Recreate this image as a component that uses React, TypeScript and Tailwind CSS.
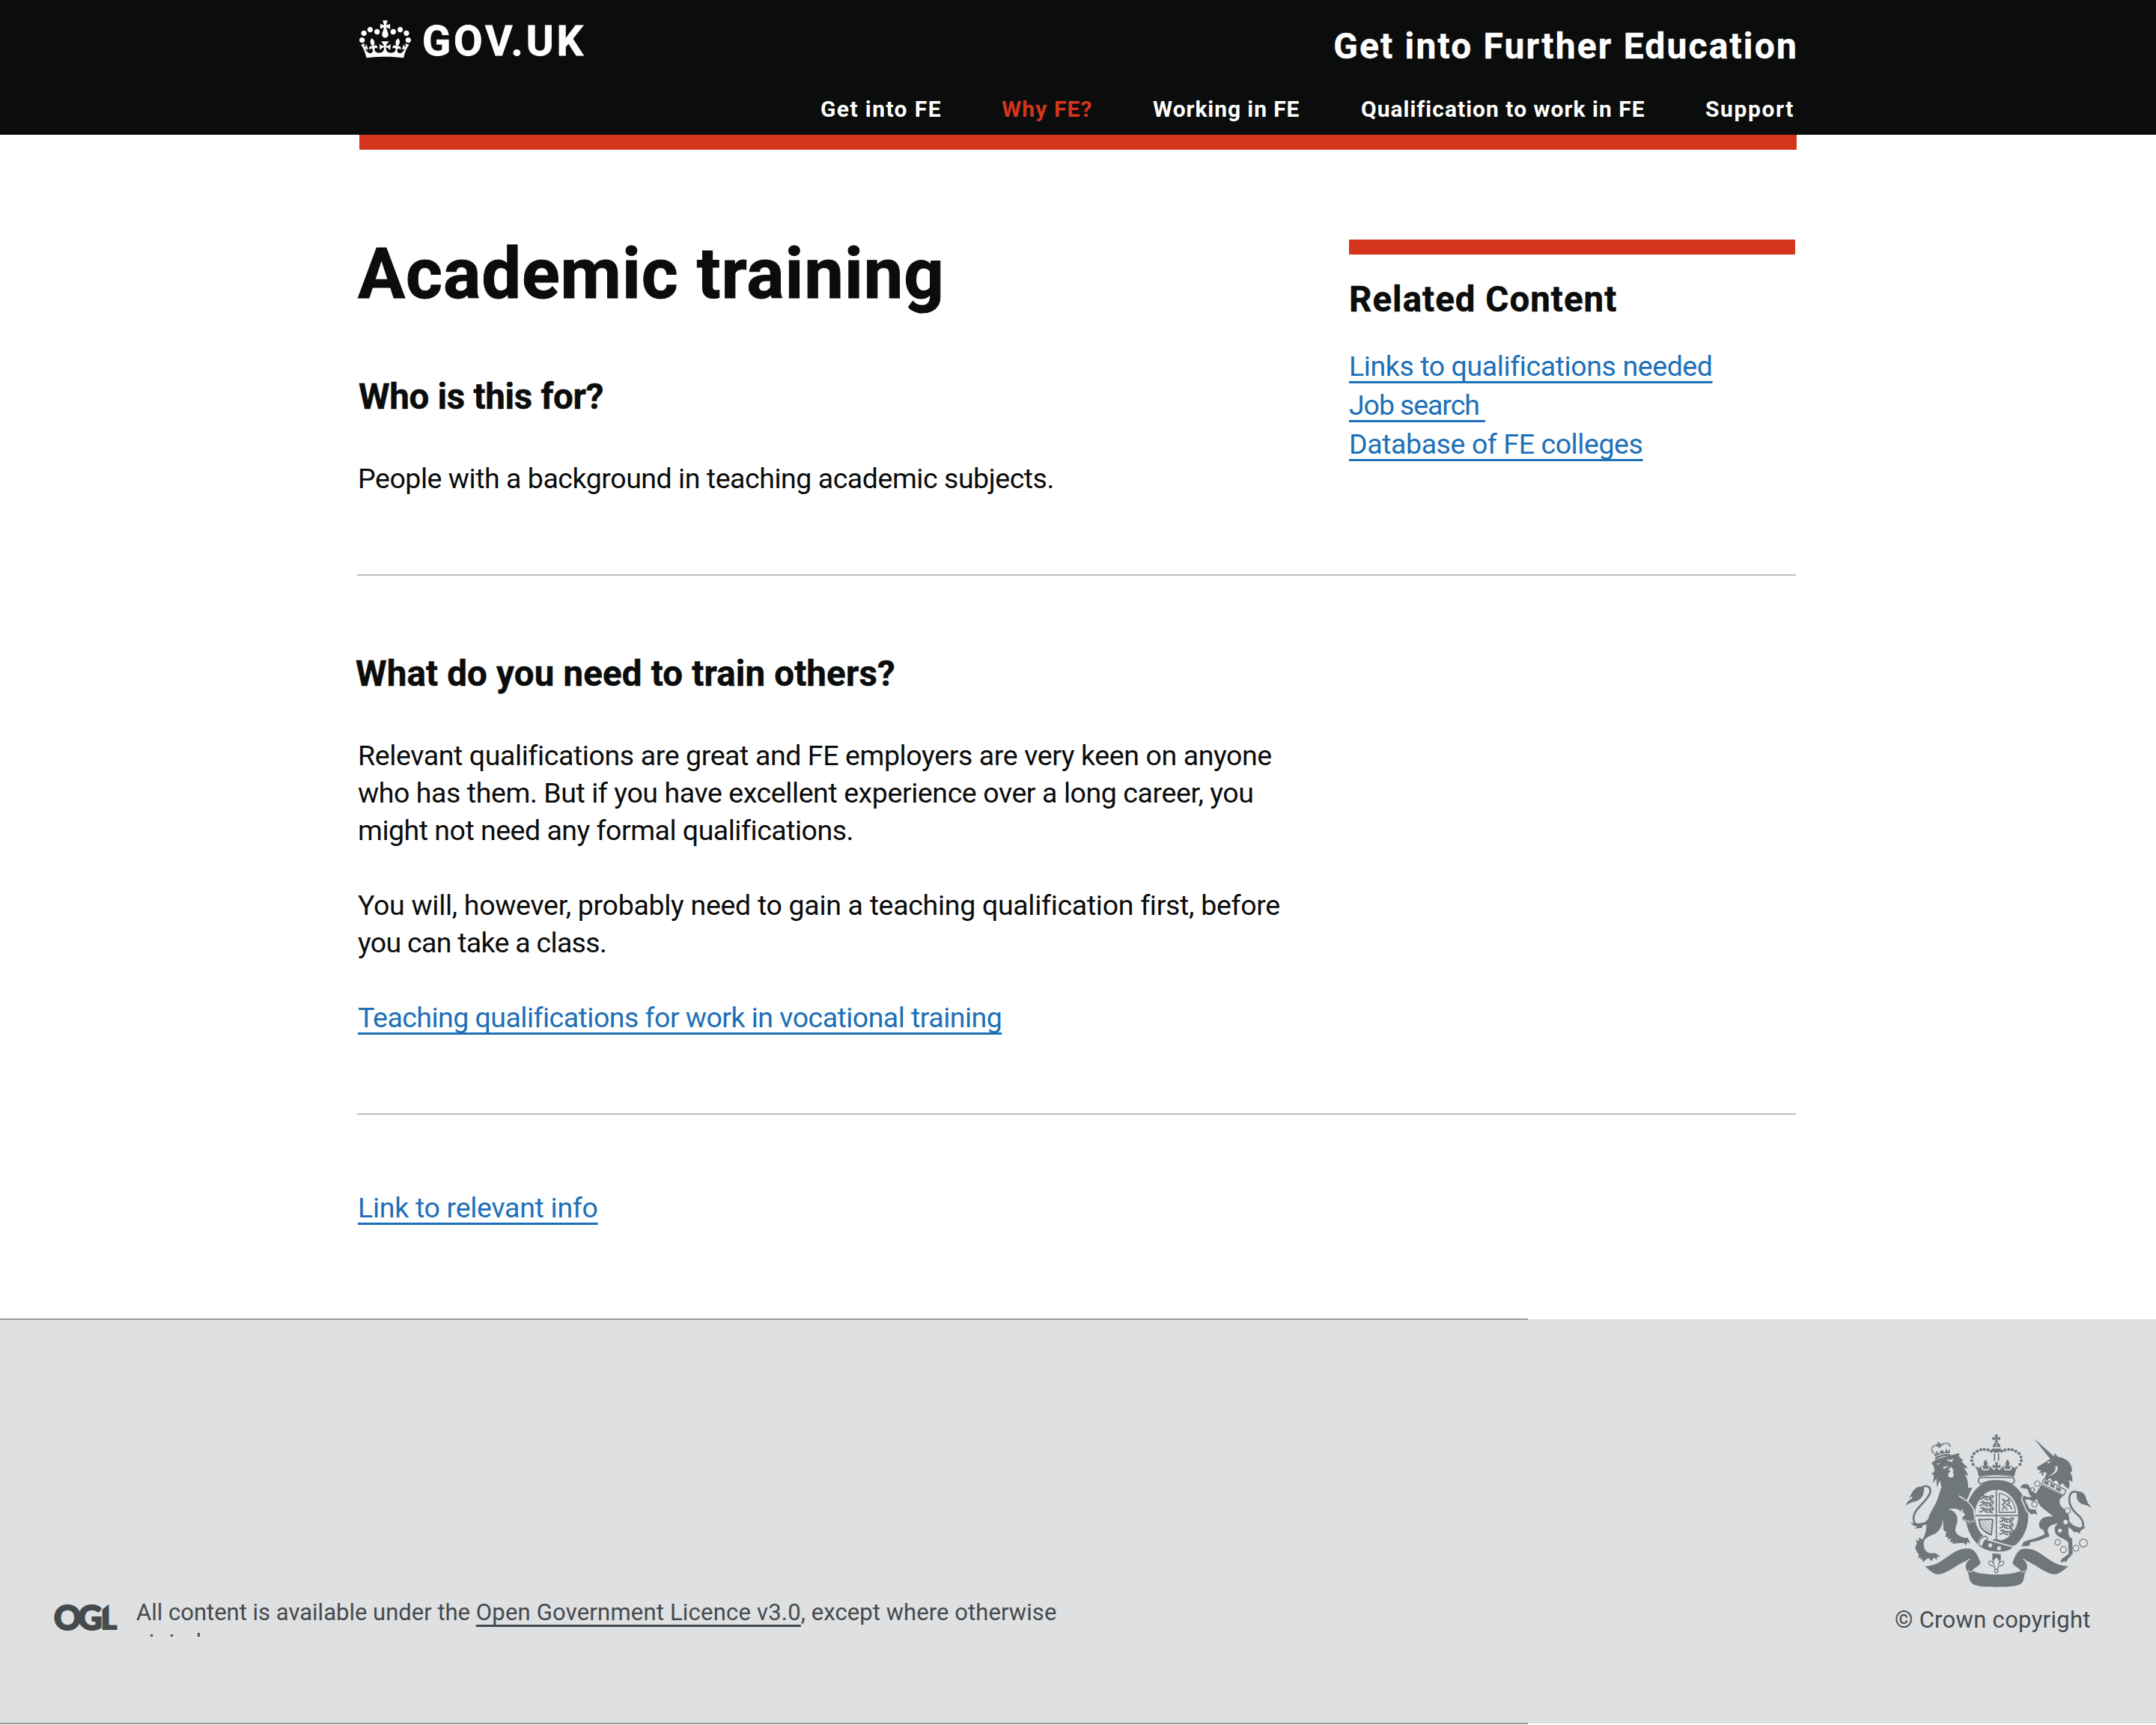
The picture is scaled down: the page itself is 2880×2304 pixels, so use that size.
import type { ReactNode } from "react";

const NAV = [
  { label: "Get into FE", style: "ml-px tracking-[1.4px] text-white" },
  { label: "Why FE?", style: "tracking-[1.1px] text-[#d4351c]" },
  { label: "Working in FE", style: "tracking-[0.9px] text-white" },
  { label: "Qualification to work in FE", style: "ml-px tracking-[1.02px] text-white" },
  { label: "Support", style: "ml-px tracking-[1.6px] text-white" },
];

const LINK =
  "text-[#1d70b8] underline decoration-[3px] underline-offset-[7px] [text-decoration-skip-ink:none] whitespace-pre";

function Crown() {
  return (
    <svg viewBox="0 0 132 97" className="h-[51px] w-[69px]" fill="#fff" fillRule="evenodd">
      <path d="M25 30.2c3.5 1.5 7.7-.2 9.1-3.7 1.5-3.6-.2-7.8-3.9-9.2-3.6-1.4-7.6.3-9.1 3.9-1.4 3.5.3 7.5 3.9 9zM9 39.5c3.6 1.5 7.8-.2 9.2-3.7 1.5-3.6-.2-7.8-3.9-9.1-3.6-1.5-7.6.2-9.1 3.8-1.4 3.5.3 7.5 3.8 9zM4.4 57.2c3.5 1.5 7.7-.2 9.1-3.8 1.5-3.6-.2-7.7-3.9-9.1-3.5-1.5-7.6.3-9.1 3.8-1.4 3.5.3 7.6 3.9 9.1zm38.3-21.4c3.5 1.5 7.7-.2 9.1-3.8 1.5-3.6-.2-7.7-3.9-9.1-3.6-1.5-7.6.3-9.1 3.8-1.3 3.6.4 7.7 3.9 9.1zm64.4-5.6c-3.6 1.5-7.8-.2-9.1-3.7-1.5-3.6.2-7.8 3.8-9.2 3.6-1.4 7.7.3 9.2 3.9 1.3 3.5-.4 7.5-3.9 9zm15.9 9.3c-3.6 1.5-7.7-.2-9.1-3.7-1.5-3.6.2-7.8 3.7-9.1 3.6-1.5 7.7.2 9.2 3.8 1.5 3.5-.3 7.5-3.8 9zm4.7 17.7c-3.6 1.5-7.8-.2-9.2-3.8-1.5-3.6.2-7.7 3.9-9.1 3.6-1.5 7.7.3 9.2 3.8 1.3 3.5-.4 7.6-3.9 9.1zM89.3 35.8c-3.6 1.5-7.8-.2-9.2-3.8-1.4-3.6.2-7.7 3.9-9.1 3.6-1.5 7.7.3 9.2 3.8 1.4 3.6-.3 7.7-3.9 9.1zM69.7 17.7l8.9 4.7V9.3l-8.9 2.8c-.2-.3-.5-.6-.9-.9L72.4 0H59.6l3.5 11.2c-.3.3-.6.5-.9.9l-8.8-2.8v13.1l8.8-4.7c.3.3.6.7.9.9l-5 15.4v.1c-.2.8-.4 1.6-.4 2.4 0 4.1 3.1 7.5 7 8.1h.2c.3 0 .7.1 1 .1.4 0 .7 0 1-.1h.2c4-.6 7.1-4.1 7.1-8.1 0-.8-.1-1.7-.4-2.4V34l-5.1-15.4c.4-.2.7-.6 1-.9zM66 92.8c16.9 0 32.8 1.1 47.1 3.2 4-16.9 8.9-26.7 14-33.5l-9.6-3.4c1 4.9 1.1 7.2 0 10.2-1.5-1.4-3-4.3-4.2-8.7L108.6 76c2.8-2 5-3.2 7.5-3.3-4.4 9.4-10 11.9-13.6 11.2-4.3-.8-6.3-4.6-5.6-7.9 1-4.7 5.7-5.9 8-.5 4.3-8.7-3-11.4-7.6-8.8 7.1-7.2 7.9-13.5 2.1-21.1-8 6.1-8.1 12.3-4.5 20.8-4.7-5.4-12.1-2.5-9.5 6.2 3.4-5.2 7.9-2 7.2 3.1-.6 4.3-6.4 7.8-13.5 7.2-10.3-.9-10.9-8-11.2-13.8 2.5-.5 7.1 1.8 11 7.3L80.2 60c-4.1 4.4-8 5.3-12.3 5.4 1.4-4.4 8-11.6 8-11.6H55.5s6.4 7.2 7.9 11.6c-4.2-.1-8-1-12.3-5.4l1.4 16.4c3.9-5.5 8.5-7.7 10.9-7.3-.3 5.8-.9 12.8-11.1 13.8-7.2.6-12.9-2.9-13.5-7.2-.7-5 3.8-8.3 7.1-3.1 2.7-8.7-4.6-11.6-9.4-6.2 3.7-8.5 3.6-14.7-4.6-20.8-5.8 7.6-5 13.9 2.2 21.1-4.7-2.6-11.9.1-7.7 8.8 2.3-5.5 7.1-4.2 8.1.5.7 3.3-1.3 7.1-5.7 7.9-3.5.7-9-1.8-13.5-11.2 2.5.1 4.7 1.3 7.5 3.3l-4.7-15.4c-1.2 4.4-2.7 7.2-4.3 8.7-1.1-3-.9-5.3 0-10.2l-9.5 3.4c5 6.9 9.9 16.7 14 33.5 14.8-2.1 30.8-3.2 47.7-3.2z" />
    </svg>
  );
}

const INK = "#6f777b";
const PAPER = "#dee0e2";

// Pearls on the left arch of the imperial crown; the right arch mirrors them.
const PEARLS = [
  [407, 228], [402, 213], [403, 198], [411, 184], [424, 175], [438, 169], [452, 168], [467, 170], [480, 175],
];

const BEZANTS = [
  [664, 305, 11], [645, 329, 8], [653, 388, 11], [786, 413, 11], [746, 540, 11], [769, 569, 12], [819, 564, 12], [849, 543, 16],
];

// A cross with flared arms centred on the origin.
function CrossPattee({ x, y, s }: { x: number; y: number; s: number }) {
  return (
    <path
      transform={`translate(${x} ${y}) scale(${s})`}
      d="M-7-16H7L3-3 16-7V7L3 3 7 16H-7L-3 3-16 7V-7L-3-3Z"
    />
  );
}

// Three walking lions, stacked.
function LionStack({ x, y }: { x: number; y: number }) {
  return (
    <g transform={`translate(${x} ${y})`} fill="none" stroke={INK} strokeWidth="5">
      {[0, 25, 50].map((dy) => (
        <path
          key={dy}
          d={`M-4 ${dy + 18}l13-3 2-7 14-2 12 3 6-6 10 1-4 7-8 4 2 6 8 1M0 ${dy + 4}l10-3 6 3-2 5M27 ${dy + 8}l-3 11 9 1M39 ${dy + 9}l-2 9 5 2M14 ${dy + 9}l6 9`}
        />
      ))}
    </g>
  );
}

function RoyalArms() {
  return (
    <svg viewBox="132 102 756 624" className="h-[208px] w-[252px]" fill={INK} strokeLinejoin="round">
      {/* lion tail */}
      <path d="M202 474C160 474 160 432 188 402 220 368 236 350 236 332 234 314 218 312 204 318" fill="none" stroke={INK} strokeWidth="8" />
      <path d="M208 318C182 312 168 330 160 346L150 362C160 356 170 354 160 366 146 374 140 382 138 394 156 372 192 384 206 350 212 334 212 324 208 318Z" />
      <path d="M156 460C176 470 196 462 212 460 226 450 238 438 244 424 242 446 234 462 222 468L206 472 200 484C192 482 184 484 172 486L182 476C170 476 162 470 156 460Z" />
      {/* lion body */}
      <path d="M240 222L262 206 352 182 350 196 368 212 360 216C372 226 380 234 386 244L370 240C378 254 384 262 388 274L374 268C384 282 388 304 387 322L406 320C396 330 394 348 380 372L398 392C408 400 412 420 412 436L404 462 396 446 384 460 384 446 370 456 364 440 376 428 362 418 366 404 356 416C350 404 330 402 306 408 326 410 342 424 344 444 346 470 332 480 337 498 347 516 370 524 386 522L397 546 385 538 378 553C376 546 372 542 366 542L340 544 324 546 326 538 314 540 318 524C312 524 310 530 308 534L306 520 296 518 300 496C292 498 290 492 288 488L286 444C284 474 272 498 250 508 230 516 212 524 210 538 206 562 216 582 240 584 256 582 270 588 274 600L262 597 262 613C258 606 254 602 248 602L242 616 228 604C222 606 214 612 206 620L204 606 194 610 198 600 186 602 190 590C180 576 174 566 176 556L182 546 178 530 190 534 190 521 204 528C214 514 220 490 220 470L232 430 246 404C262 380 270 350 280 318L274 292 262 320 260 284 246 302 250 272 240 264C250 262 252 256 252 250L250 236Z" />
      <path d="M302 208l14 2 12-6-6 14-16-4zM262 224l12-2-8 8zM286 238l24-4-10 6-10 6zM308 250l10-14 10 14-2 10q6 8 2 16-8 8-18 2-6-8 0-16l8-8z" fill={PAPER} />
      {/* lion crown */}
      <g transform="translate(280 170) rotate(-12)">
        <path d="M-32 24Q0 14 32 24L31 32Q0 22-31 32ZM-30 20L-34 2-24 12-20-2-13 12-8 12-6 2H6L8 12 13 12 20-2 24 12 34 2 30 20Q0 10-30 20Z" />
        <path d="M-36 0C-44-24-14-30 0-14 14-30 44-24 36 0" fill="none" stroke={INK} strokeWidth="7.5" strokeDasharray="0.1 10" strokeLinecap="round" />
        <CrossPattee x={-6} y={-22} s={0.7} />
      </g>
      {/* unicorn tail */}
      <path d="M828 496C858 480 852 450 822 426 796 402 790 380 793 358 798 336 812 334 828 340" fill="none" stroke={INK} strokeWidth="8" />
      <path d="M822 336C850 334 858 352 860 366L866 378C860 378 874 388 882 404 864 384 836 396 824 366 820 352 824 342 822 336Z" />
      <path d="M788 448C800 474 830 486 858 478 852 486 846 490 838 492L834 506 824 498 812 500C806 490 796 484 788 478Z" />
      {/* unicorn */}
      <path d="M650 123L733 197 717 207Z" />
      <path d="M664 238C682 228 700 216 718 204L731 198 733 182 748 198C782 202 802 222 804 252L797 262C804 274 806 284 805 298L790 290C796 306 794 316 790 326L778 318C770 310 770 306 764 304L752 314C748 300 746 296 740 292L726 298 716 282 704 290 694 280 702 264C692 254 684 264 690 274L680 270 684 262 670 262 680 252 664 248Z" />
      <path d="M744 234C752 256 734 268 708 276 726 264 742 254 736 236Z M702 220l16-6-8 10z" fill={PAPER} />
      <path d="M692 284L780 332 770 352 682 306Z" fill={PAPER} stroke={INK} strokeWidth="4" />
      <path d="M690 302l6-14 5 10 8-4 0 18zM714 314l6-14 5 10 8-4 0 18zM738 328l6-14 5 10 8-4 2 18z" />
      <path d="M680 310L768 354C752 366 748 380 762 398 776 410 790 420 790 432 796 452 790 468 789 490 788 510 792 520 804 524L806 586C796 592 800 600 790 602L778 621 772 614 766 620 758 620C760 608 768 600 772 600L790 586 788 540C776 524 742 520 736 500 732 484 734 472 748 464 728 466 706 476 706 490 706 504 716 514 713 516L668 534 636 540 634 552 618 556 598 555C606 548 608 538 612 538 622 532 640 528 656 524L690 510C700 504 688 500 688 490 668 486 666 462 682 446 698 434 718 438 728 436L700 414C680 400 664 384 664 366L650 376 630 368 614 370 634 408C644 406 652 412 658 408L664 430 650 424 640 430 622 416 602 368 606 352C620 358 634 362 642 356 628 350 634 340 624 326L598 322C596 308 620 302 630 312 636 320 636 334 648 340L658 344Z" />
      <circle cx="778" cy="459" r="9" fill={PAPER} />
      <circle cx="755" cy="493" r="8" fill={PAPER} />
      {BEZANTS.map(([cx, cy, r]) => (
        <circle key={`${cx}-${cy}`} cx={cx} cy={cy} r={r} fill={PAPER} stroke={INK} strokeWidth="3.5" />
      ))}
      {/* garter */}
      <ellipse cx="503" cy="434" rx="125" ry="145" />
      <ellipse cx="501" cy="432" rx="87" ry="103" fill={PAPER} />
      <path d="M500 329V530M414 433H588" stroke={INK} strokeWidth="5" />
      <LionStack x={436} y={350} />
      <LionStack x={516} y={440} />
      <path d="M512 344V420H576C576 380 552 350 512 344Z" fill="none" stroke={INK} strokeWidth="4" />
      <path d="M524 412l8-14-8-10 12-4-8-14 14 6 8-10 2 16-10 8 14 4 6 14M536 396l8 16M524 364l6 10" fill="none" stroke={INK} strokeWidth="5" />
      <path d="M431 448C452 454 466 442 486 450L480 510C460 502 436 490 434 466Z" fill="none" stroke={INK} strokeWidth="6" />
      <path d="M442 456l34 42M452 454l28 34M464 452l18 22M440 466l30 36" fill="none" stroke={INK} strokeWidth="2.5" />
      <path d="M486 529C496 526 512 528 522 534L516 540 490 536Z" />
      {/* lion paw over the garter */}
      <path d="M350 354C376 368 398 388 410 408L413 436" fill="none" stroke={PAPER} strokeWidth="5" />
      <path d="M376 372C392 384 404 400 408 412L411 440 408 458 400 452 392 462 388 450 376 458 378 448 366 450 364 440 376 430 364 414Z" stroke={PAPER} strokeWidth="5" paintOrder="stroke" />
      <path d="M340 376L378 374 400 404 392 440 372 436 378 424 362 404Z" />
      <path d="M606 352L602 368 622 416 640 430" fill="none" stroke={PAPER} strokeWidth="5" />
      {/* buckle and strap */}
      <path d="M430 556C424 536 438 516 454 514 466 514 470 524 466 530L560 556C580 556 594 552 604 548L566 562C550 586 470 586 436 560Z" stroke={PAPER} strokeWidth="5" />
      <path d="M432 552C426 534 440 518 454 516 466 516 470 528 460 530 446 532 450 552 440 558Z" fill={PAPER} stroke={INK} strokeWidth="4" />
      <circle cx="476" cy="552" r="8" fill={PAPER} />
      <circle cx="511" cy="564" r="8" fill={PAPER} />
      {/* imperial crown */}
      <path d="M438 280H563C576 284 576 300 563 306 520 288 480 288 438 306 425 300 425 284 438 280Z" fill={PAPER} stroke={INK} strokeWidth="5" />
      <path d="M430 277L424 252 414 234 430 242 438 234 442 250 456 252 470 250 474 234 488 250H514L528 234 532 250 546 252 560 250 564 234 572 242 588 234 578 252 572 277C530 270 472 270 430 277Z" />
      <path d="M457 208C468 222 466 230 460 236L472 232 466 246H448L442 232 454 236C448 230 446 222 457 208ZM545 208C556 222 554 230 548 236L560 232 554 246H536L530 232 542 236C536 230 534 222 545 208Z" />
      <CrossPattee x={501} y={236} s={1} />
      {PEARLS.map(([cx, cy]) => (
        <g key={cx * cy}>
          <circle cx={cx} cy={cy} r="6.3" />
          <circle cx={1002 - cx} cy={cy} r="6.3" />
        </g>
      ))}
      <path d="M493 184V214M509 184V214" stroke={INK} strokeWidth="5" />
      <path d="M482 164H520C520 174 512 181 501 181S482 174 482 164ZM492 142H510L518 158H484Z" />
      <path d="M501 142V158" stroke={PAPER} strokeWidth="3" />
      <CrossPattee x={500} y={124} s={1} />
      {/* ribbon */}
      <path d="M214 636C262 634 284 610 320 587 350 567 372 562 396 566 415 570 426 592 437 622 430 640 404 644 405 655 440 674 560 674 597 655 597 644 572 640 565 622 576 592 585 572 604 567 636 562 656 571 684 590 720 615 745 634 789 636 770 650 755 668 732 668 700 668 650 622 612 611 624 626 628 640 618 656 610 670 614 684 604 702 590 716 560 719 500 719 440 719 412 716 398 700 388 682 392 668 384 656 374 640 376 624 390 611 350 622 300 668 268 668 245 668 232 650 214 636Z" />
      <path d="M378 622C384 612 390 608 394 608M624 622C618 612 612 608 608 608M386 654C392 659 398 659 405 656M616 654C610 659 604 659 597 656" fill="none" stroke={PAPER} strokeWidth="3.5" />
      {/* pendant */}
      <path d="M484 584L518 587V612H484Z" />
      <path d="M500 598C514 610 516 618 508 632 514 612 532 610 530 624 528 636 516 632 508 638L504 648H496L492 638C484 632 472 636 470 624 468 610 486 612 492 632 484 618 488 610 500 598Z" fill={PAPER} stroke={INK} strokeWidth="3.5" />
      <circle cx="500" cy="655" r="7" fill={PAPER} stroke={INK} strokeWidth="3.5" />
    </svg>
  );
}

function H2({ children, className }: { children: ReactNode; className: string }) {
  return <h2 className={`text-[47.5px] font-bold leading-[56px] [-webkit-text-stroke:0.5px_currentColor] ${className}`}>{children}</h2>;
}

export default function App() {
  return (
    <div className="h-[2304px] w-[2880px] overflow-hidden bg-white font-[Roboto,sans-serif] text-[#0b0c0c]">
      <header className="h-[180px] bg-[#0b0c0c] text-white">
        <div className="mx-auto flex w-[1920px] justify-between">
          <a className="mt-[27px] flex h-[56px] gap-[15px]">
            <Crown />
            <span className="text-[56px] font-bold leading-[56px] tracking-[3.9px] [-webkit-text-stroke:0.8px_currentColor]">GOV.UK</span>
          </a>
          <div className="mt-[34px] flex flex-col items-end">
            <div className="-mr-[2px] text-[48px] font-bold leading-[56px] tracking-[2.14px] [-webkit-text-stroke:0.4px_currentColor]">Get into Further Education</div>
            <nav className="mt-[38px] grid grid-cols-[243px_202px_277px_460px_123px] text-[30px] font-bold leading-[36px]">
              {NAV.map((n) => (
                <a key={n.label} className={n.style}>{n.label}</a>
              ))}
            </nav>
          </div>
        </div>
      </header>
      <div className="mx-auto h-[20px] w-[1920px] bg-[#d4351c]" />

      <main className="ml-[477px] w-[1922px] text-[37.5px] leading-[50px]">
        <section className="flex justify-between border-b-2 border-[#bfbfbf] pb-[103px]">
          <div>
            <h1 className="ml-px mt-[116px] text-[94px] font-bold leading-[100px] tracking-[0.9px] [-webkit-text-stroke:1px_currentColor]">Academic training</h1>
            <H2 className="ml-[2px] mt-[86px] tracking-[-0.3px]">Who is this for?</H2>
            <p className="ml-px mt-[56px] tracking-[-0.46px]">People with a background in teaching academic subjects.</p>
          </div>
          <aside className="mr-px mt-[120px] w-[596px]">
            <div className="h-[20px] bg-[#d4351c]" />
            <H2 className="mt-[32px] tracking-[1px]">Related Content</H2>
            <ul className="mt-[35px] leading-[52px]">
              <li><a className={`${LINK} tracking-[-0.41px]`}>Links to qualifications needed</a></li>
              <li><a className={`${LINK} tracking-[-1.1px]`}>{"Job search\u00a0"}</a></li>
              <li><a className={`${LINK} tracking-[-0.42px]`}>Database of FE colleges</a></li>
            </ul>
          </aside>
        </section>

        <section className="border-b-2 border-[#bfbfbf] pb-[103px]">
          <H2 className="-ml-[2px] pt-[103px] tracking-[0.15px]">What do you need to train others?</H2>
          <p className="ml-px mt-[56px]">
            <span className="block tracking-[-0.4px]">Relevant qualifications are great and FE employers are very keen on anyone</span>
            <span className="block tracking-[-0.42px]">who has them. But if you have excellent experience over a long career, you</span>
            <span className="block tracking-[-0.5px]">might not need any formal qualifications.</span>
          </p>
          <p className="ml-px mt-[50px]">
            <span className="block tracking-[-0.31px]">You will, however, probably need to gain a teaching qualification first, before</span>
            <span className="block tracking-[-0.7px]">you can take a class.</span>
          </p>
          <p className="ml-px mt-[50px]">
            <a className={`${LINK} tracking-[-0.53px]`}>Teaching qualifications for work in vocational training</a>
          </p>
        </section>

        <p className="ml-px mt-[99px]">
          <a className={`${LINK} tracking-[-0.29px]`}>Link to relevant info</a>
        </p>
      </main>

      <footer className="relative mt-[124px] flex h-[540px] justify-between bg-[#dee0e2] pl-[72px] pr-[86px] text-[31px] leading-[40px] text-[#454a4d]">
        <div className="absolute -top-px left-0 h-[2px] w-[2041px] bg-[#979899]" />
        <div className="absolute -bottom-px left-0 h-[2px] w-[2041px] bg-[#979899]" />
        <div className="mt-[371px] flex h-[53px] overflow-hidden">
          <div className="w-[110px] pt-[10px] font-[Lato,sans-serif] text-[45px] font-black leading-[34px] tracking-[-4.4px] [-webkit-text-stroke:2px_#454a4d]">
            OG<span className="ml-[2px] inline-block [clip-path:polygon(2px_7px,11px_0,22px_0,22px_100%,0_100%,0_9px)]">L</span>
          </div>
          <p className="w-[1240px] pt-px">
            All content is available under the{" "}
            <a className="tracking-[0.2px] underline decoration-[3px] underline-offset-[6px] [text-decoration-skip-ink:none]">Open Government Licence v3.0</a>
            <span className="tracking-[0.08px]">, except where otherwise</span>
            <br />
            stated.
          </p>
        </div>
        <div className="mt-[152px] w-[264px]">
          <div className="ml-[14px]">
            <RoyalArms />
          </div>
          <div className="ml-px mt-[22px] whitespace-nowrap tracking-[0.3px]">© Crown copyright</div>
        </div>
      </footer>
    </div>
  );
}
